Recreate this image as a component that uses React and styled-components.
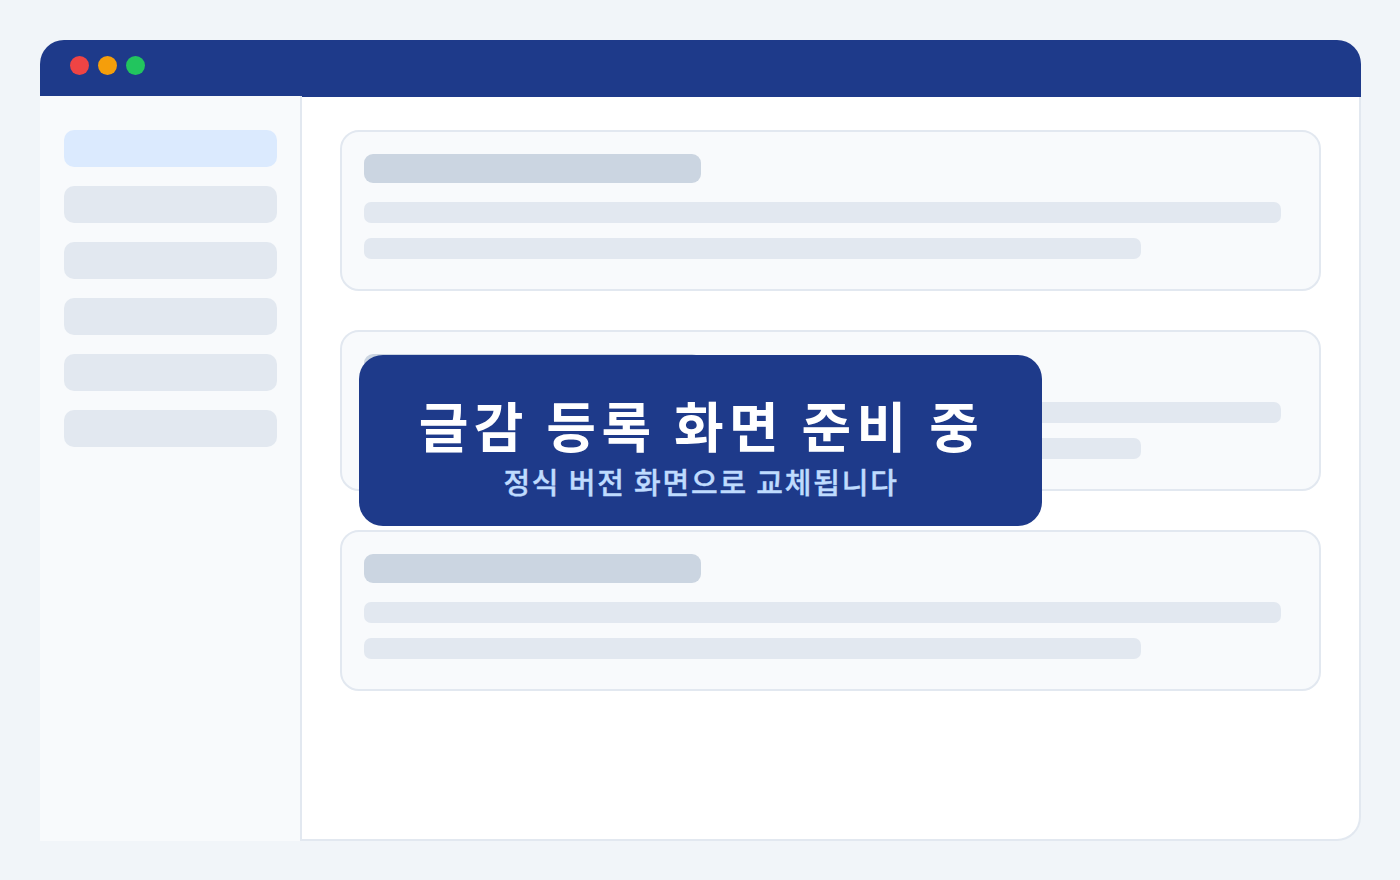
import React from 'react';
import styled, { createGlobalStyle } from 'styled-components';

const Global = createGlobalStyle`
  html, body { margin: 0; padding: 0; background: #f1f5f9; }
  body { font-family: "Noto Sans CJK KR", "Noto Sans", sans-serif; }
`;

const Page = styled.div`
  width: 1400px;
  height: 880px;
  padding: 40px 39px 39px 40px;
  box-sizing: border-box;
  background: #f1f5f9;
  overflow: hidden;
`;

const Window = styled.div`
  position: relative;
  width: 1321px;
  height: 801px;
  display: flex;
  flex-direction: column;
`;

const TitleBar = styled.header`
  flex: none;
  height: 57px;
  box-sizing: border-box;
  padding: 0 0 6px 30px;
  display: flex;
  align-items: center;
  gap: 9px;
  background: #1e3a8a;
  border-radius: 24px 24px 0 0;
`;

const Dot = styled.span`
  width: 19px;
  height: 19px;
  border-radius: 50%;
  background: ${p => p.$color};
`;

const Body = styled.div`
  flex: 1;
  min-height: 0;
  display: flex;
`;

const Sidebar = styled.aside`
  flex: none;
  width: 262px;
  margin-top: -1px;
  box-sizing: border-box;
  padding: 34px 23px 0 24px;
  display: flex;
  flex-direction: column;
  gap: 19px;
  background: #f8fafc;
  border-right: 2px solid #e2e8f0;
`;

const NavItem = styled.div`
  height: 37px;
  border-radius: 10px;
  background: ${p => (p.$active ? '#dbeafe' : '#e2e8f0')};
`;

const Main = styled.main`
  flex: 1;
  box-sizing: border-box;
  padding: 33px 38px 0;
  display: flex;
  flex-direction: column;
  gap: 39px;
  background: #fff;
  border-right: 2px solid #e2e8f0;
  border-bottom: 2px solid #e2e8f0;
  border-bottom-right-radius: 24px;
`;

const Card = styled.section`
  height: 161px;
  box-sizing: border-box;
  padding: 22px 38px 0 22px;
  background: #f8fafc;
  border: 2px solid #e2e8f0;
  border-radius: 19px;
`;

const CardTitle = styled.div`
  width: 337px;
  height: 29px;
  margin-bottom: 19px;
  border-radius: 9px;
  background: #cbd5e1;
`;

const Line = styled.div`
  width: ${p => p.$width}px;
  height: 21px;
  margin-bottom: 15px;
  border-radius: 7px;
  background: #e2e8f0;
`;

const Notice = styled.div`
  position: absolute;
  left: 319px;
  top: 315px;
  width: 683px;
  height: 171px;
  box-sizing: border-box;
  padding-top: 36px;
  border-radius: 24px;
  background: #1e3a8a;
  text-align: center;
`;

const NoticeTitle = styled.h1`
  margin: 0;
  font-size: 54px;
  line-height: 68px;
  font-weight: 700;
  letter-spacing: 5.33px;
  text-indent: 2px;
  color: #fff;
`;

const NoticeSub = styled.p`
  margin: 0;
  font-size: 29px;
  line-height: 44px;
  font-weight: 500;
  letter-spacing: 1.8px;
  text-indent: 1px;
  -webkit-text-stroke: 0.4px #bfdbfe;
  color: #bfdbfe;
`;

export default function App() {
  return (
    <Page>
      <Global />
      <Window>
        <TitleBar>
          <Dot $color="#ef4444" />
          <Dot $color="#f59e0b" />
          <Dot $color="#22c55e" />
        </TitleBar>
        <Body>
          <Sidebar>
            <NavItem $active />
            {[0, 1, 2, 3, 4].map(i => <NavItem key={i} />)}
          </Sidebar>
          <Main>
            {[0, 1, 2].map(i => (
              <Card key={i}>
                <CardTitle />
                <Line $width={917} />
                <Line $width={777} />
              </Card>
            ))}
          </Main>
        </Body>
        <Notice>
          <NoticeTitle>글감 등록 화면 준비 중</NoticeTitle>
          <NoticeSub>정식 버전 화면으로 교체됩니다</NoticeSub>
        </Notice>
      </Window>
    </Page>
  );
}
